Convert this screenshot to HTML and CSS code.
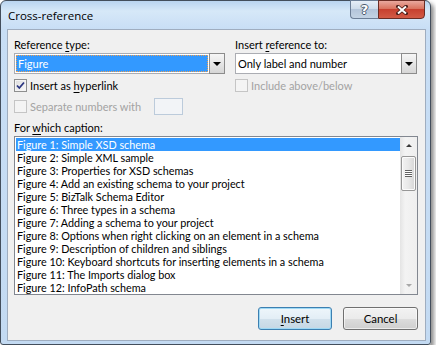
FILE: index.html
```html
<!DOCTYPE html>
<html lang="en">
<head>
    <meta charset="UTF-8">
    <meta name="viewport" content="width=device-width, initial-scale=1.0">
    <title>Cross-reference</title>
    <link rel="stylesheet" href="styles.css">
</head>
<body>
    <div class="window">
        <div class="titlebar">
            <span class="title">Cross-reference</span>
            <div class="caption-buttons">
                <div class="cap help">?</div>
                <div class="cap close">
                    <svg width="12" height="10" viewBox="0 0 12 10">
                        <path d="M2 1.5 L10 8.5 M10 1.5 L2 8.5" stroke="#4a1d18" stroke-width="3.6" stroke-linecap="square"/>
                        <path d="M2 1.5 L10 8.5 M10 1.5 L2 8.5" stroke="#ffffff" stroke-width="2"/>
                    </svg>
                </div>
            </div>
        </div>

        <div class="client">
            <div class="top-fields">
                <div class="field-col">
                    <div class="label">Reference <u>t</u>ype:</div>
                    <div class="combo">
                        <div class="combo-value selected"><span class="focus">Figure</span></div>
                        <div class="drop-btn"><span class="arrow"></span></div>
                    </div>
                    <div class="check-row">
                        <span class="checkbox checked">
                            <svg width="11" height="11" viewBox="0 0 11 11">
                                <path d="M2 5.5 L4.3 8 L9 2.5" fill="none" stroke="#2a3580" stroke-width="1.8"/>
                            </svg>
                        </span>
                        <span>Insert as <u>h</u>yperlink</span>
                    </div>
                    <div class="check-row disabled">
                        <span class="checkbox"></span>
                        <span>Separate numbers with</span>
                        <span class="num-box"></span>
                    </div>
                </div>
                <div class="field-col">
                    <div class="label">Insert <u>r</u>eference to:</div>
                    <div class="combo">
                        <div class="combo-value">Only label and number</div>
                        <div class="drop-btn"><span class="arrow"></span></div>
                    </div>
                    <div class="check-row disabled">
                        <span class="checkbox"></span>
                        <span>Include above/below</span>
                    </div>
                </div>
            </div>

            <div class="label caption-label">For <u>w</u>hich caption:</div>
            <div class="listbox">
                <ul class="items">
                    <li class="selected">Figure 1: Simple XSD schema</li>
                    <li>Figure 2: Simple XML sample</li>
                    <li>Figure 3: Properties for XSD schemas</li>
                    <li>Figure 4: Add an existing schema to your project</li>
                    <li>Figure 5: BizTalk Schema Editor</li>
                    <li>Figure 6: Three types in a schema</li>
                    <li>Figure 7: Adding a schema to your project</li>
                    <li>Figure 8: Options when right clicking on an element in a schema</li>
                    <li>Figure 9: Description of children and siblings</li>
                    <li>Figure 10: Keyboard shortcuts for inserting elements in a schema</li>
                    <li>Figure 11: The Imports dialog box</li>
                    <li>Figure 12: InfoPath schema</li>
                </ul>
                <div class="scrollbar">
                    <div class="sb-arrow up"></div>
                    <div class="sb-track">
                        <div class="sb-thumb"><span class="grip"></span></div>
                    </div>
                    <div class="sb-arrow down"></div>
                </div>
            </div>

            <div class="buttons">
                <button class="btn default"><u>I</u>nsert</button>
                <button class="btn">Cancel</button>
            </div>
        </div>
    </div>
</body>
</html>
```

FILE: styles.css
```css
body {
    margin: 0;
    background-color: #ffffff;
    font-family: Lato, "Open Sans", sans-serif;
    font-size: 11px;
    color: #000000;
}
u {
    text-decoration-thickness: 1px;
    text-underline-offset: 2px;
}
.window {
    width: 431px;
    height: 345px;
    box-sizing: border-box;
    border: 1px solid #434e5c;
    border-radius: 6px 6px 3px 3px;
    background: linear-gradient(180deg, #b9d4f0 0, #d6e8f8 10px, #c8def5 28px, #c3daf2 100%);
    box-shadow: 3px 3px 4px rgba(0, 0, 0, 0.45);
    padding: 0 4px 3px 6px;
    display: flex;
    flex-direction: column;
}
.titlebar {
    height: 28px;
    display: flex;
    align-items: center;
}
.title {
    padding-left: 1px;
    font-family: "Open Sans", sans-serif;
    font-size: 11.5px;
    margin-top: 1px;
}
.caption-buttons {
    margin-left: auto;
    margin-right: 1px;
    align-self: flex-start;
    margin-top: -1px;
    display: flex;
}
.cap {
    height: 19px;
    box-sizing: border-box;
    display: flex;
    align-items: center;
    justify-content: center;
}
.help {
    width: 28px;
    border: 1px solid #6c7e96;
    border-right: none;
    border-radius: 0 0 0 4px;
    background: linear-gradient(180deg, #e6eef7 0, #cfdcea 45%, #b4c5da 50%, #c3d3e4 100%);
    color: #ffffff;
    font-family: "DejaVu Sans", sans-serif;
    font-weight: bold;
    font-size: 13px;
    text-shadow: 1px 0 0 #4c5a6e, -1px 0 0 #4c5a6e, 0 1px 0 #4c5a6e, 0 -1px 0 #4c5a6e;
}
.close {
    width: 47px;
    border: 1px solid #6a2c24;
    border-radius: 0 0 4px 0;
    background: linear-gradient(180deg, #e9a89e 0, #d9735f 45%, #c7402f 50%, #d25a45 100%);
}
.client {
    flex: 1;
    border: 1px solid #9fadbf;
    background-color: #f0f0f0;
    padding: 7px 7px 10px 6px;
    display: flex;
    flex-direction: column;
}
.label {
    height: 15px;
    line-height: 15px;
}
.top-fields {
    display: grid;
    grid-template-columns: 211px 182px;
    column-gap: 10px;
}
.combo {
    margin-top: 1px;
    height: 21px;
    box-sizing: border-box;
    border: 1px solid #abadb3;
    background-color: #ffffff;
    display: flex;
}
.combo-value {
    flex: 1;
    padding-left: 2px;
    line-height: 19px;
}
.combo-value.selected {
    padding: 1px;
}
.focus {
    display: block;
    height: 17px;
    box-sizing: border-box;
    line-height: 15px;
    padding-left: 1px;
    background-color: #3399ff;
    color: #ffffff;
    border: 1px dotted #f0a050;
}
.drop-btn {
    width: 16px;
    box-sizing: border-box;
    border: 1px solid #8c8c8c;
    margin: -1px -1px -1px 0;
    background: linear-gradient(180deg, #f6f6f6 0, #e6e6e6 50%, #d6d6d6 100%);
    display: flex;
    align-items: center;
    justify-content: center;
}
.arrow {
    width: 0;
    height: 0;
    border-left: 4px solid transparent;
    border-right: 4px solid transparent;
    border-top: 4px solid #000000;
    margin-top: 1px;
}
.check-row {
    display: flex;
    align-items: center;
    height: 15px;
    margin-top: 4px;
}
.check-row + .check-row {
    height: 17px;
    margin-top: 5px;
}
.checkbox {
    width: 13px;
    height: 13px;
    box-sizing: border-box;
    border: 1px solid #8e8f8f;
    background: linear-gradient(135deg, #e0e0e0 0, #f6f6f6 100%);
    box-shadow: inset 0 0 0 1px #f4f4f4;
    margin-right: 3px;
    display: flex;
    align-items: center;
    justify-content: center;
}
.checkbox.checked {
    background: linear-gradient(135deg, #dcdcdc 0, #fbfbfb 100%);
}
.disabled {
    color: #a3a3a3;
}
.disabled .checkbox {
    border-color: #c5c5c5;
    background: #f4f4f4;
    box-shadow: none;
}
.num-box {
    width: 29px;
    height: 17px;
    box-sizing: border-box;
    border: 1px solid #bccbdb;
    background-color: #f2f4f7;
    margin-left: 13px;
}
.caption-label {
    margin-top: 5px;
}
.listbox {
    margin-top: 1px;
    height: 159px;
    box-sizing: border-box;
    border: 1px solid #828790;
    background-color: #ffffff;
    display: flex;
}
.items {
    flex: 1;
    list-style: none;
    margin: 0;
    padding: 1px 0 0 1px;
    overflow: hidden;
    font-size: 10.8px;
}
.items li {
    height: 13px;
    line-height: 13px;
    padding-left: 1px;
    white-space: nowrap;
}
.items li.selected {
    background-color: #3399ff;
    color: #ffffff;
}
.scrollbar {
    width: 17px;
    display: flex;
    flex-direction: column;
    background: linear-gradient(90deg, #e4e4e4 0, #f3f3f3 30%, #efefef 100%);
}
.sb-arrow {
    height: 17px;
    display: flex;
    align-items: center;
    justify-content: center;
}
.sb-arrow::before {
    content: "";
    border-left: 3px solid transparent;
    border-right: 3px solid transparent;
}
.sb-arrow.up::before {
    border-bottom: 3px solid #3a3a3a;
}
.sb-arrow.down::before {
    border-top: 3px solid #a8a8a8;
}
.sb-track {
    flex: 1;
    padding: 2px 1px 0 1px;
}
.sb-thumb {
    height: 35px;
    box-sizing: border-box;
    border: 1px solid #979797;
    border-radius: 2px;
    background: linear-gradient(90deg, #f3f3f3 0, #e8e8e8 50%, #d6d6d6 100%);
    box-shadow: inset 0 0 0 1px #fbfbfb;
    display: flex;
    align-items: center;
    justify-content: center;
}
.grip {
    width: 7px;
    height: 7px;
    background: repeating-linear-gradient(180deg, #626262 0, #626262 1px, #ffffff 1px, #ffffff 2px);
}
.buttons {
    margin-top: 12px;
    display: flex;
    justify-content: flex-end;
    gap: 11px;
}
.btn {
    width: 74px;
    height: 23px;
    padding: 0;
    border: 1px solid #707070;
    border-radius: 3px;
    background: linear-gradient(180deg, #f2f2f2 0, #ebebeb 50%, #dddddd 50%, #cfcfcf 100%);
    box-shadow: inset 0 0 0 1px rgba(255, 255, 255, 0.6);
    font-family: inherit;
    font-size: 11.4px;
    color: #000000;
}
.btn.default {
    border-color: #3c7fb1;
    box-shadow: inset 0 0 0 1px #9fd9f5;
    background: linear-gradient(180deg, #eef6fb 0, #e3eef6 50%, #d2e1ec 50%, #c6d7e4 100%);
}
.btn + .btn {
    width: 75px;
}
```
